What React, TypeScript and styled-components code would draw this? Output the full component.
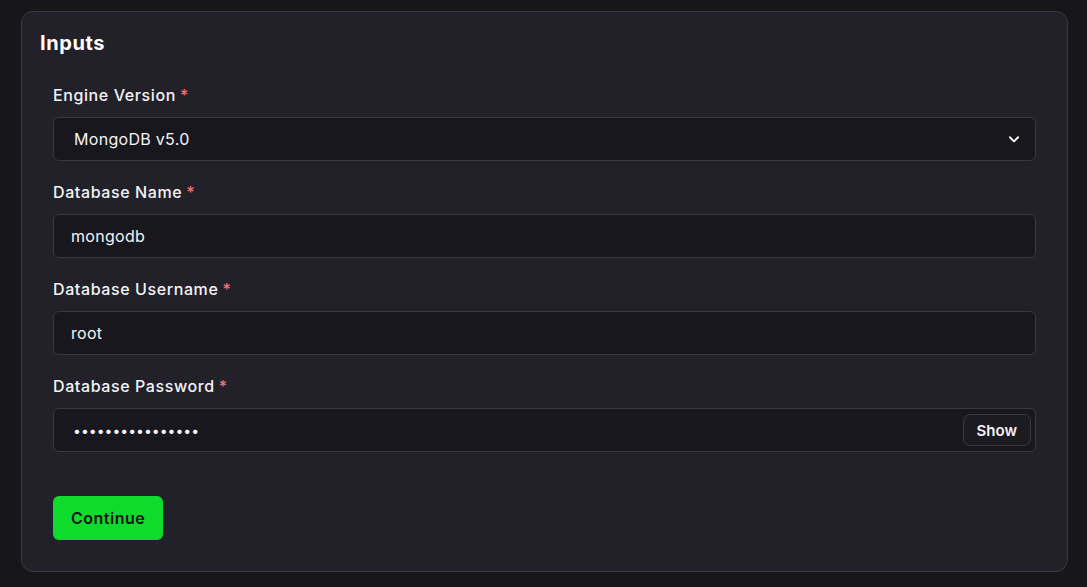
import React, { useState } from "react";
import styled, { createGlobalStyle } from "styled-components";

const GlobalStyle = createGlobalStyle`
  html, body {
    margin: 0;
    padding: 0;
    background: #17161b;
  }
  * {
    box-sizing: border-box;
  }
  body {
    font-family: Inter, "Noto Sans", "Liberation Sans", sans-serif;
    color: #f4f4f5;
  }
`;

const Page = styled.div`
  padding: 11px 19px 15px 21px;
  min-height: 587px;
`;

const Card = styled.section`
  background: #22212a;
  border: 1px solid #3a3940;
  border-radius: 12px;
  padding: 17px 31px 31px 18px;
`;

const Title = styled.h2`
  margin: 0 0 26px;
  font-size: 20px;
  line-height: 28px;
  font-weight: 700;
  letter-spacing: 0.6px;
  color: #ffffff;
`;

const Form = styled.form`
  display: flex;
  flex-direction: column;
  padding-left: 13px;
`;

const Field = styled.div`
  display: flex;
  flex-direction: column;
  gap: 10px;
  margin-bottom: 19px;
`;

const Label = styled.label`
  font-size: 16px;
  line-height: 24px;
  font-weight: 500;
  letter-spacing: 0.6px;
  color: #f4f4f5;
`;

const Required = styled.span`
  color: #f87171;
  margin-left: 4px;
`;

const InputBox = styled.div`
  position: relative;
  display: flex;
  align-items: center;
  height: 44px;
  background: #18171d;
  border: 1px solid #3a3940;
  border-radius: 6px;
`;

const TextInput = styled.input<{ $pad?: number; $secret?: boolean }>`
  flex: 1;
  height: 100%;
  background: transparent;
  border: none;
  outline: none;
  color: #f4f4f5;
  font-family: inherit;
  font-size: ${(p) => (p.$secret ? 14 : 16)}px;
  letter-spacing: ${(p) => (p.$secret ? 0 : 0.3)}px;
  padding: 0 ${(p) => p.$pad ?? 17}px;
`;

const Select = styled.select`
  flex: 1;
  height: 100%;
  appearance: none;
  background: transparent;
  border: none;
  outline: none;
  color: #f4f4f5;
  font-family: inherit;
  font-size: 16px;
  letter-spacing: 0.3px;
  padding: 0 20px;
`;

const Chevron = styled.svg`
  position: absolute;
  right: 14px;
  top: 50%;
  transform: translateY(-50%);
  pointer-events: none;
`;

const ShowButton = styled.button`
  position: absolute;
  right: 4px;
  top: 5px;
  height: 32px;
  padding: 0 13px;
  background: #1c1b21;
  border: 1px solid #3a3940;
  border-radius: 7px;
  color: #f4f4f5;
  font-family: inherit;
  font-size: 15px;
  font-weight: 600;
  cursor: pointer;
`;

const Submit = styled.button`
  align-self: flex-start;
  margin-top: 25px;
  height: 44px;
  padding: 0 18px;
  background: #0edb2b;
  border: none;
  border-radius: 6px;
  color: #141414;
  font-family: inherit;
  font-size: 16px;
  font-weight: 600;
  letter-spacing: 0.5px;
  cursor: pointer;
`;

export default function App() {
  const [show, setShow] = useState(false);
  const [password, setPassword] = useState("xK9pQ2mT7vR4sL8w");

  return (
    <>
      <GlobalStyle />
      <Page>
        <Card>
          <Title>Inputs</Title>
          <Form onSubmit={(e) => e.preventDefault()}>
            <Field>
              <Label>
                Engine Version<Required>*</Required>
              </Label>
              <InputBox>
                <Select defaultValue="5.0">
                  <option value="5.0">MongoDB v5.0</option>
                  <option value="6.0">MongoDB v6.0</option>
                </Select>
                <Chevron width="14" height="14" viewBox="0 0 24 24" fill="none" stroke="#ffffff" strokeWidth="3.2" strokeLinecap="round" strokeLinejoin="round">
                  <path d="M5 9l7 7 7-7" />
                </Chevron>
              </InputBox>
            </Field>
            <Field>
              <Label>
                Database Name<Required>*</Required>
              </Label>
              <InputBox>
                <TextInput defaultValue="mongodb" />
              </InputBox>
            </Field>
            <Field>
              <Label>
                Database Username<Required>*</Required>
              </Label>
              <InputBox>
                <TextInput defaultValue="root" />
              </InputBox>
            </Field>
            <Field>
              <Label>
                Database Password<Required>*</Required>
              </Label>
              <InputBox>
                <TextInput
                  $pad={19}
                  $secret={!show}
                  type={show ? "text" : "password"}
                  value={password}
                  onChange={(e) => setPassword(e.target.value)}
                />
                <ShowButton type="button" onClick={() => setShow((s) => !s)}>
                  {show ? "Hide" : "Show"}
                </ShowButton>
              </InputBox>
            </Field>
            <Submit type="submit">Continue</Submit>
          </Form>
        </Card>
      </Page>
    </>
  );
}
